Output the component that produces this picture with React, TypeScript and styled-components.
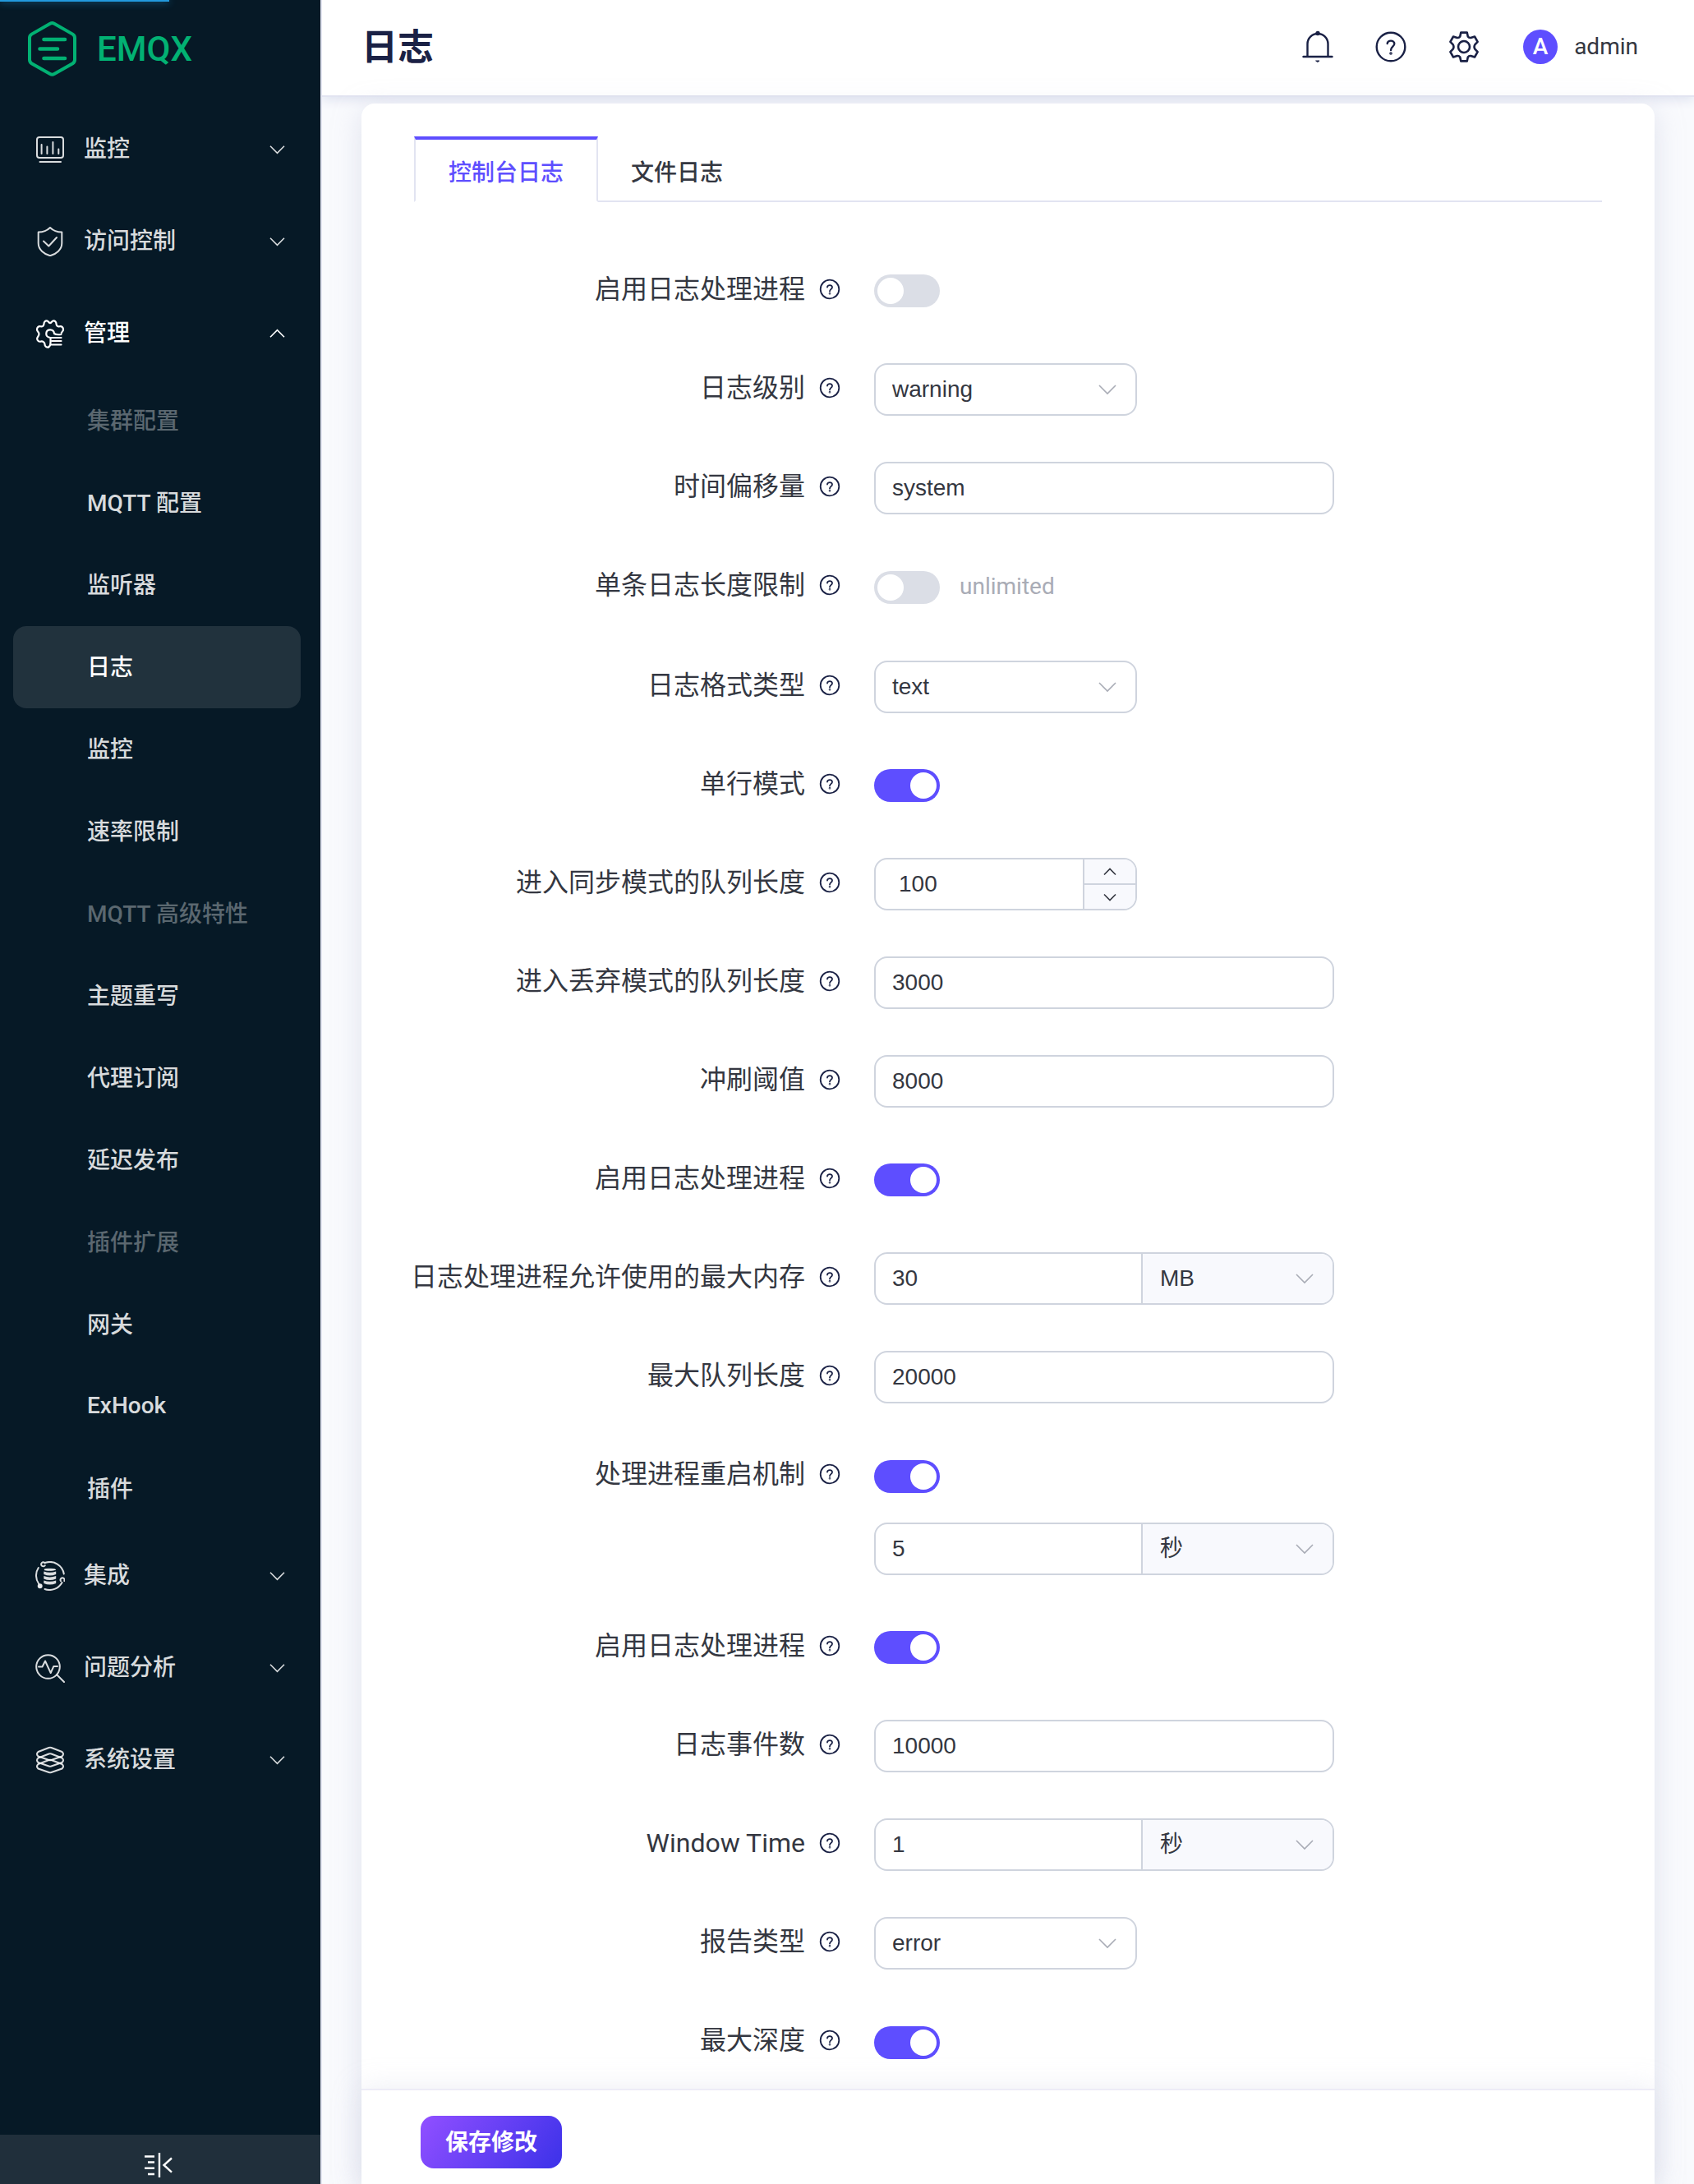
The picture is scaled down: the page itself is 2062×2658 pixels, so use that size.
import React, { useId, useState } from "react";
import styled, { createGlobalStyle, css } from "styled-components";

const uiFont = `Roboto, "Noto Sans CJK SC", sans-serif`;
const controlFont = `"Liberation Sans", "Noto Sans CJK SC", sans-serif`;

const color = {
  primary: "#5e4eff",
  text: "#343741",
  heading: "#1a2145",
  muted: "#a9acb6",
  border: "#cfd4de",
  line: "#e2e4f1",
  fill: "#f8f9fd",
  switchOff: "#dbdee6",
  sidebar: "#061926",
  brand: "#02b173",
};

const GlobalStyle = createGlobalStyle`
  *, *::before, *::after { box-sizing: border-box; }
  body {
    margin: 0;
    background: #f9fafd;
    color: ${color.text};
    font-family: ${uiFont};
    font-size: 28px;
  }
  button, input, select { margin: 0; font: inherit; color: inherit; }
  button { padding: 0; border: 0; background: none; cursor: pointer; }
  a { color: inherit; text-decoration: none; }
  ul { margin: 0; padding: 0; list-style: none; }
`;

const Shell = styled.div`
  display: flex;
  min-height: 100vh;
`;

const LoadingBar = styled.div`
  position: fixed;
  top: 0;
  left: 0;
  z-index: 10;
  width: 10%;
  height: 2px;
  background: #2299dd;
  box-shadow: 0 0 10px #2299dd;
`;

/* Sidebar */

const Sidebar = styled.aside`
  display: flex;
  flex: none;
  flex-direction: column;
  z-index: 1;
  width: 392px;
  border-right: 2px solid ${color.line};
  background: ${color.sidebar};
  color: rgba(255, 255, 255, 0.85);
`;

const Brand = styled.a`
  display: flex;
  align-items: center;
  gap: 22px;
  height: 126px;
  padding: 0 0 6px 32px;
  color: ${color.brand};
  font-size: 42px;
  font-weight: 500;
  line-height: 64px;
`;

const Menu = styled.nav`
  flex: 1;
`;

const MenuHead = styled.button<{ $open?: boolean }>`
  display: flex;
  align-items: center;
  width: 100%;
  height: 112px;
  padding: 0 43px;
  font-weight: 500;
  text-align: left;
  color: ${(p) => (p.$open ? "#fff" : "inherit")};
`;

const MenuText = styled.span`
  flex: 1;
  padding-left: 23px;
  line-height: 42px;
`;

const subItem = css`
  display: flex;
  align-items: center;
  height: 100px;
  margin: 0 24px 0 16px;
  padding: 0 0 4px 90px;
  border-radius: 16px;
  font-weight: 500;
`;

const SubLink = styled.a<{ $active?: boolean }>`
  ${subItem}
  ${(p) => p.$active && "background: rgba(255, 255, 255, 0.11); color: #fff;"}
`;

const SubCaption = styled.span`
  ${subItem}
  color: rgba(255, 255, 255, 0.34);
`;

const Collapse = styled.button`
  display: flex;
  justify-content: center;
  height: 60px;
  padding: 22px 4px 0 0;
  background: #202f3b;
  color: #fff;
`;

/* Header */

const Main = styled.div`
  display: flex;
  flex: 1;
  flex-direction: column;
  min-width: 0;
`;

const Header = styled.header`
  display: flex;
  align-items: center;
  justify-content: space-between;
  height: 118px;
  padding: 0 68px 2px 48px;
  border-bottom: 2px solid ${color.line};
  background: #fff;
  box-shadow: 0 4px 12px #dfe3f0;
`;

const Title = styled.h1`
  margin: 0;
  padding-top: 2px;
  color: ${color.heading};
  font-size: 44px;
  font-weight: 600;
  line-height: 64px;
`;

const HeaderTools = styled.div`
  display: flex;
  align-items: center;
  gap: 49px;
`;

const IconButton = styled.button`
  display: flex;
  width: 40px;
  height: 40px;
  color: ${color.heading};
`;

const User = styled.button`
  display: flex;
  align-items: center;
  gap: 20px;
  padding-left: 3px;
  line-height: 40px;
`;

const Avatar = styled.span`
  width: 42px;
  height: 42px;
  border-radius: 50%;
  background: ${color.primary};
  color: #fff;
  font-weight: 500;
  line-height: 42px;
  text-align: center;
`;

/* Card */

const Content = styled.main`
  display: flex;
  flex: 1;
  flex-direction: column;
  padding: 8px 48px 0;
`;

const Card = styled.section`
  display: flex;
  flex: 1;
  flex-direction: column;
  padding-top: 40px;
  border-radius: 16px 16px 0 0;
  background: #fff;
  box-shadow: 0 8px 32px rgba(200, 204, 224, 0.5);
`;

const Tabs = styled.div`
  display: flex;
  height: 80px;
  margin: 0 64px;
  border-bottom: 2px solid ${color.line};
`;

const Tab = styled.button<{ $active?: boolean }>`
  height: 80px;
  padding: 4px 40px 0;
  font-weight: 500;
  ${(p) =>
    p.$active &&
    css`
      padding-top: 2px;
      border: 2px solid ${color.line};
      border-top: 4px solid ${color.primary};
      border-bottom-color: #fff;
      background: #fff;
      color: ${color.primary};
    `}
`;

const Form = styled.form`
  display: flex;
  flex: 1;
  flex-direction: column;
`;

const Rows = styled.div`
  display: flex;
  flex: 1;
  flex-direction: column;
  gap: 56px;
  padding: 76px 56px 23px;
`;

const Row = styled.div`
  display: grid;
  grid-template-columns: 568px minmax(0, 560px);
`;

const Label = styled.label`
  display: flex;
  align-items: center;
  justify-content: flex-end;
  gap: 16px;
  height: 60px;
  padding-right: 40px;
  font-size: 32px;
  line-height: 48px;
  white-space: nowrap;
`;

const Field = styled.div`
  display: flex;
  flex-direction: column;
  gap: 23px;
`;

const SwitchLine = styled.div<{ $tall?: boolean }>`
  display: flex;
  align-items: center;
  gap: 24px;
  height: ${(p) => (p.$tall ? 66 : 64)}px;
`;

const Hint = styled.span`
  padding-bottom: 2px;
  color: ${color.muted};
  line-height: 40px;
`;

const Switch = styled.input`
  appearance: none;
  flex: none;
  width: 80px;
  height: 40px;
  padding: 4px;
  border-radius: 20px;
  background: ${color.switchOff};
  cursor: pointer;

  &::before {
    content: "";
    display: block;
    width: 32px;
    height: 32px;
    border-radius: 50%;
    background: #fff;
  }
  &:checked {
    background: ${color.primary};
  }
  &:checked::before {
    margin-left: auto;
  }
`;

const frame = css`
  height: 64px;
  border: 2px solid ${color.border};
  border-radius: 16px;
  background: #fff;
  font-family: ${controlFont};
`;

const TextInput = styled.input`
  ${frame}
  width: 100%;
  padding: 0 20px;
  outline: none;
`;

const Frame = styled.div<{ $narrow?: boolean }>`
  ${frame}
  display: flex;
  width: ${(p) => (p.$narrow ? "320px" : "100%")};
  overflow: hidden;
`;

const BareInput = styled.input<{ $inset?: boolean }>`
  appearance: textfield;
  flex: 1;
  min-width: 0;
  padding: 0 ${(p) => (p.$inset ? 28 : 20)}px;
  border: 0;
  outline: none;
  background: none;
  &::-webkit-inner-spin-button {
    display: none;
  }
`;

const SelectBox = styled.span<{ $unit?: boolean }>`
  display: grid;
  flex: ${(p) => (p.$unit ? "0 0 233px" : "1")};
  align-items: center;
  ${(p) =>
    p.$unit &&
    css`
      padding-left: 1px;
      border-left: 2px solid ${color.border};
      background: ${color.fill};
    `}

  > * {
    grid-area: 1 / 1;
  }
  > svg {
    justify-self: end;
    margin-right: 23px;
    color: ${color.muted};
    pointer-events: none;
  }
`;

const NativeSelect = styled.select`
  appearance: none;
  width: 100%;
  height: 60px;
  padding: 0 56px 2px 20px;
  border: 0;
  outline: none;
  background: none;
`;

const StepButtons = styled.span`
  display: flex;
  flex: 0 0 64px;
  flex-direction: column;
  border-left: 2px solid ${color.border};
  background: ${color.fill};
`;

const StepButton = styled.button`
  display: flex;
  flex: 1;
  align-items: center;
  justify-content: center;
  & + & {
    border-top: 2px solid ${color.border};
  }
`;

const Footer = styled.footer`
  position: sticky;
  bottom: 0;
  height: 116px;
  padding: 31px 72px 0;
  border-top: 2px solid #edecf7;
  background: #fff;
  box-shadow: 0 0 32px rgba(200, 204, 224, 0.35);
`;

const SaveButton = styled.button`
  height: 64px;
  padding: 0 30px 4px;
  border-radius: 16px;
  background: linear-gradient(125deg, #8d4eff 5%, #4033ea 95%);
  color: #fff;
  font-weight: 700;
`;

/* Icons */

type IconProps = { size?: number; children: React.ReactNode; width?: number };

const Icon = ({ size = 36, width = 2, children }: IconProps) => (
  <svg
    width={size}
    height={size}
    viewBox={`0 0 ${size} ${size}`}
    fill="none"
    stroke="currentColor"
    strokeWidth={width}
    strokeLinecap="round"
    strokeLinejoin="round"
    aria-hidden="true"
  >
    {children}
  </svg>
);

const Chevron = ({ up, w = 20 }: { up?: boolean; w?: number }) => {
  const high = 7 - w / 4;
  const low = 7 + w / 4;
  const [ends, tip] = up ? [low, high] : [high, low];
  return (
    <svg width={w + 2} height="14" viewBox={`0 0 ${w + 2} 14`} fill="none" stroke="currentColor" strokeWidth="1.6" aria-hidden="true">
      <path d={`M1 ${ends} L${w / 2 + 1} ${tip} L${w + 1} ${ends}`} />
    </svg>
  );
};

const LogoMark = () => (
  <svg width="64" height="68" viewBox="0 0 64 68" fill="none" stroke="currentColor" aria-hidden="true">
    <path
      d="M29 2.800 L6.500 15.600 Q4 17.200 4 20 V46.800 Q4 49.600 6.500 51.200 L29 64 Q31.500 65.400 34 64 L56.500 51.200 Q59 49.600 59 46.800 V20 Q59 17.200 56.500 15.600 L34 2.800 Q31.500 1.400 29 2.800 Z"
      strokeWidth="4"
    />
    <path d="M21.500 22 H47 M16.500 33.500 H38 M21.500 45 H47" strokeWidth="4.600" strokeLinecap="round" />
  </svg>
);

const MonitorIcon = () => (
  <Icon>
    <rect x="2" y="3" width="32" height="25" rx="3" />
    <path d="M7.600 12 V23 M14.400 14.500 V23 M21.400 9 V23 M28.300 17.500 V23 M5.500 33 H31" />
  </Icon>
);

const ShieldIcon = () => (
  <Icon>
    <path d="M18 1 C14.500 4.500 9 6.500 3.700 6.500 V20 C3.700 28 11 33.500 18 35.200 C25 33.500 32.300 28 32.300 20 V6.500 C27 6.500 21.500 4.500 18 1 Z" />
    <path d="M10 17.500 L16.300 23.500 L26 13" />
  </Icon>
);

const ManageIcon = () => (
  <Icon width={2.2}>
    <path d="M16 34.500 C13.500 35 11.500 33.500 11.500 31 C11.500 28.500 9 26.800 6.500 27.600 C4 28.300 2 26 2.200 23.800 C2.400 21.800 4.500 21 4.500 18.500 C4.500 16 2 15.500 2 13 C2 10.500 4 8.500 6.500 9.200 C8.500 9.800 10.500 8.500 10.500 6 C10.500 3.500 12.500 1.800 14.500 2.500 C16.300 3.200 16.500 5.200 18 5.200 C19.500 5.200 19.700 3.200 21.500 2.500 C23.500 1.800 25.500 3.500 25.500 6 C25.500 8.500 27.500 9.800 29.500 9.200 C32 8.500 34 10.500 34 13 C34 15 32.500 15.500 31.800 17" />
    <path d="M16 34.500 C18 33.500 18.500 31.500 18.500 29 V23 C14.500 22.500 13 20 13.300 17.500 C14 12 22.500 12 23 18 C25 19.500 28 19.500 31.500 19" />
    <path d="M18.500 23 H31.500 M20 27 H31.500 M19 31.500 H31.500" />
  </Icon>
);

const IntegrationIcon = () => (
  <Icon>
    <path d="M12.500 1.800 A17.300 17.300 0 0 1 34.800 15.500" />
    <path d="M32.500 26 A17.300 17.300 0 0 1 11.500 34" />
    <path d="M4.200 27.500 A17.300 17.300 0 0 1 3.800 8" />
    <path d="M11.500 2.200 A2.500 2.500 0 1 0 11.700 5.200 M31 24.300 A2.500 2.500 0 1 1 35.300 24" />
    <circle cx="5.700" cy="30.300" r="2" fill="currentColor" />
    <ellipse cx="17.700" cy="10.300" rx="6.800" ry="1" fill="currentColor" strokeWidth="1" />
    <path
      d="M10.300 12.600 Q17.700 15.100 25.200 12.600 V16 Q17.700 19 10.300 16 Z M10.300 18 Q17.700 20.800 25.200 18 V21.400 Q17.700 24.400 10.300 21.400 Z M10.300 23.400 Q17.700 26.200 25.200 23.400 V27 Q17.700 30 10.300 27 Z"
      fill="currentColor"
      stroke="none"
    />
  </Icon>
);

const DiagnoseIcon = () => (
  <Icon>
    <circle cx="15.500" cy="16.500" r="14.300" />
    <path d="M26.500 26.500 L35 35 M4 16.500 H8.500 L12 9.500 L18.700 24 L22.300 16 H27" />
  </Icon>
);

const LayersIcon = () => (
  <Icon width={2.1}>
    {[11, 18.5, 26].map((y) => (
      <path
        key={y}
        d={`M16.5 ${y - 8} L3.5 ${y - 3} Q0.5 ${y - 0.5} 3.5 ${y + 2.5} L16.5 ${y + 7} Q18 ${y + 7.5} 19.5 ${y + 7} L32.5 ${y + 2.5} Q35.5 ${y - 0.5} 32.5 ${y - 3} L19.5 ${y - 8} Q18 ${y - 8.5} 16.5 ${y - 8} Z`}
      />
    ))}
  </Icon>
);

const CollapseIcon = () => (
  <svg width="34" height="32" viewBox="0 0 34 32" fill="none" stroke="currentColor" strokeWidth="2.400" aria-hidden="true">
    <path d="M0 4.500 H12 M4 11.500 H12 M0 18.800 H12 M4 26 H12 M18 0 V30 M33 6.500 L23.500 15 L33 23.700" />
  </svg>
);

const BellIcon = () => (
  <Icon size={40} width={2.4}>
    <path d="M7.500 32 V16.500 A12.500 12.500 0 0 1 32.500 16.500 V32 M2.500 32 H37.500" />
    <circle cx="20" cy="3.500" r="1.500" fill="currentColor" />
    <path d="M18 37 H22 L20 38.300 Z" fill="currentColor" strokeWidth="1" />
  </Icon>
);

const HelpIcon = () => (
  <Icon size={40} width={2.4}>
    <circle cx="20" cy="20" r="17.300" />
    <path d="M15.700 16 C15.700 11.500 24.500 11.500 24.300 16.300 C24.200 19.500 20 20 20 24" />
    <circle cx="20" cy="28" r="0.600" fill="currentColor" />
  </Icon>
);

const GearIcon = () => (
  <Icon size={40} width={2.6}>
    <path d="M16.300 2.600 H23.700 L24.800 7.500 Q26 9.300 28.300 9 L33 7.500 L36.600 13.800 L33.300 17.300 Q31.800 20 33.300 22.700 L36.600 26.200 L33 32.500 L28.300 31 Q26 30.700 24.800 32.500 L23.700 37.400 H16.300 L15.200 32.500 Q14 30.700 11.700 31 L7 32.500 L3.400 26.200 L6.700 22.700 Q8.200 20 6.700 17.300 L3.400 13.800 L7 7.500 L11.700 9 Q14 9.300 15.200 7.500 Z" />
    <circle cx="20" cy="20" r="7" />
  </Icon>
);

const HintIcon = () => (
  <Icon size={28} width={1.8}>
    <g stroke={color.heading}>
      <circle cx="14" cy="14" r="11.300" />
      <path d="M11 11.500 C11 8.300 17.200 8.300 17 11.700 C16.900 13.800 14 14 14 16.600" />
      <circle cx="14" cy="19.300" r="0.400" />
    </g>
  </Icon>
);

/* Form rows */

type FieldDef =
  | { kind: "switch"; label: string; on: boolean; tall?: boolean; hint?: string; value?: string; unit?: string }
  | { kind: "select"; label: string; value: string; options: string[] }
  | { kind: "text"; label: string; value: string }
  | { kind: "stepper"; label: string; value: number }
  | { kind: "unit"; label: string; value: string; unit: string };

const fields: FieldDef[] = [
  { kind: "switch", label: "启用日志处理进程", on: false },
  { kind: "select", label: "日志级别", value: "warning", options: ["debug", "info", "warning", "error"] },
  { kind: "text", label: "时间偏移量", value: "system" },
  { kind: "switch", label: "单条日志长度限制", on: false, tall: true, hint: "unlimited" },
  { kind: "select", label: "日志格式类型", value: "text", options: ["text", "json"] },
  { kind: "switch", label: "单行模式", on: true },
  { kind: "stepper", label: "进入同步模式的队列长度", value: 100 },
  { kind: "text", label: "进入丢弃模式的队列长度", value: "3000" },
  { kind: "text", label: "冲刷阈值", value: "8000" },
  { kind: "switch", label: "启用日志处理进程", on: true },
  { kind: "unit", label: "日志处理进程允许使用的最大内存", value: "30", unit: "MB" },
  { kind: "text", label: "最大队列长度", value: "20000" },
  { kind: "switch", label: "处理进程重启机制", on: true, tall: true, value: "5", unit: "秒" },
  { kind: "switch", label: "启用日志处理进程", on: true },
  { kind: "text", label: "日志事件数", value: "10000" },
  { kind: "unit", label: "Window Time", value: "1", unit: "秒" },
  { kind: "select", label: "报告类型", value: "error", options: ["error", "progress"] },
  { kind: "switch", label: "最大深度", on: true, tall: true },
];

const units: Record<string, string[]> = {
  MB: ["KB", "MB", "GB"],
  秒: ["毫秒", "秒", "分钟"],
};

const UnitInput = ({ id, name, value, unit }: { id?: string; name: string; value: string; unit: string }) => (
  <Frame>
    <BareInput id={id} aria-label={id ? undefined : name} defaultValue={value} />
    <SelectBox $unit>
      <NativeSelect aria-label={`${name} 单位`} defaultValue={unit}>
        {units[unit].map((u) => (
          <option key={u}>{u}</option>
        ))}
      </NativeSelect>
      <Chevron />
    </SelectBox>
  </Frame>
);

const Stepper = ({ id, initial }: { id: string; initial: number }) => {
  const [count, setCount] = useState(initial);
  return (
    <Frame $narrow>
      <BareInput id={id} type="number" $inset value={count} onChange={(e) => setCount(Number(e.target.value))} />
      <StepButtons>
        <StepButton type="button" aria-label="增加" onClick={() => setCount(count + 1)}>
          <Chevron up w={14} />
        </StepButton>
        <StepButton type="button" aria-label="减少" onClick={() => setCount(count - 1)}>
          <Chevron w={14} />
        </StepButton>
      </StepButtons>
    </Frame>
  );
};

const FormRow = ({ field }: { field: FieldDef }) => {
  const id = useId();
  return (
    <Row>
      <Label htmlFor={id}>
        {field.label}
        <HintIcon />
      </Label>
      <Field>
        {field.kind === "switch" && (
          <SwitchLine $tall={field.tall}>
            <Switch id={id} type="checkbox" role="switch" defaultChecked={field.on} />
            {field.hint && <Hint>{field.hint}</Hint>}
          </SwitchLine>
        )}
        {field.kind === "switch" && field.value && field.unit && (
          <UnitInput name={field.label} value={field.value} unit={field.unit} />
        )}
        {field.kind === "select" && (
          <Frame $narrow>
            <SelectBox>
              <NativeSelect id={id} defaultValue={field.value}>
                {field.options.map((o) => (
                  <option key={o}>{o}</option>
                ))}
              </NativeSelect>
              <Chevron />
            </SelectBox>
          </Frame>
        )}
        {field.kind === "text" && <TextInput id={id} defaultValue={field.value} />}
        {field.kind === "stepper" && <Stepper id={id} initial={field.value} />}
        {field.kind === "unit" && <UnitInput id={id} name={field.label} value={field.value} unit={field.unit} />}
      </Field>
    </Row>
  );
};

/* Menu data */

type SubEntry = { text: string; caption?: boolean; active?: boolean };

const menu: { text: string; icon: React.ReactNode; items?: SubEntry[] }[] = [
  { text: "监控", icon: <MonitorIcon /> },
  { text: "访问控制", icon: <ShieldIcon /> },
  {
    text: "管理",
    icon: <ManageIcon />,
    items: [
      { text: "集群配置", caption: true },
      { text: "MQTT 配置" },
      { text: "监听器" },
      { text: "日志", active: true },
      { text: "监控" },
      { text: "速率限制" },
      { text: "MQTT 高级特性", caption: true },
      { text: "主题重写" },
      { text: "代理订阅" },
      { text: "延迟发布" },
      { text: "插件扩展", caption: true },
      { text: "网关" },
      { text: "ExHook" },
      { text: "插件" },
    ],
  },
  { text: "集成", icon: <IntegrationIcon /> },
  { text: "问题分析", icon: <DiagnoseIcon /> },
  { text: "系统设置", icon: <LayersIcon /> },
];

export default function App() {
  return (
    <>
      <GlobalStyle />
      <LoadingBar />
      <Shell>
        <Sidebar>
          <Brand href="#">
            <LogoMark />
            EMQX
          </Brand>
          <Menu>
            <ul>
              {menu.map((group) => (
                <li key={group.text}>
                  <MenuHead type="button" $open={!!group.items} aria-expanded={!!group.items}>
                    {group.icon}
                    <MenuText>{group.text}</MenuText>
                    <Chevron up={!!group.items} w={17} />
                  </MenuHead>
                  {group.items && (
                    <ul>
                      {group.items.map((item) => (
                        <li key={item.text}>
                          {item.caption ? (
                            <SubCaption>{item.text}</SubCaption>
                          ) : (
                            <SubLink href="#" $active={item.active}>
                              {item.text}
                            </SubLink>
                          )}
                        </li>
                      ))}
                    </ul>
                  )}
                </li>
              ))}
            </ul>
          </Menu>
          <Collapse type="button" aria-label="收起菜单">
            <CollapseIcon />
          </Collapse>
        </Sidebar>
        <Main>
          <Header>
            <Title>日志</Title>
            <HeaderTools>
              <IconButton type="button" aria-label="告警">
                <BellIcon />
              </IconButton>
              <IconButton type="button" aria-label="帮助">
                <HelpIcon />
              </IconButton>
              <IconButton type="button" aria-label="设置">
                <GearIcon />
              </IconButton>
              <User type="button">
                <Avatar>A</Avatar>
                admin
              </User>
            </HeaderTools>
          </Header>
          <Content>
            <Card>
              <Tabs role="tablist">
                <Tab type="button" role="tab" aria-selected="true" $active>
                  控制台日志
                </Tab>
                <Tab type="button" role="tab" aria-selected="false">
                  文件日志
                </Tab>
              </Tabs>
              <Form onSubmit={(e) => e.preventDefault()}>
                <Rows>
                  {fields.map((field, i) => (
                    <FormRow key={i} field={field} />
                  ))}
                </Rows>
                <Footer>
                  <SaveButton type="submit">保存修改</SaveButton>
                </Footer>
              </Form>
            </Card>
          </Content>
        </Main>
      </Shell>
    </>
  );
}
